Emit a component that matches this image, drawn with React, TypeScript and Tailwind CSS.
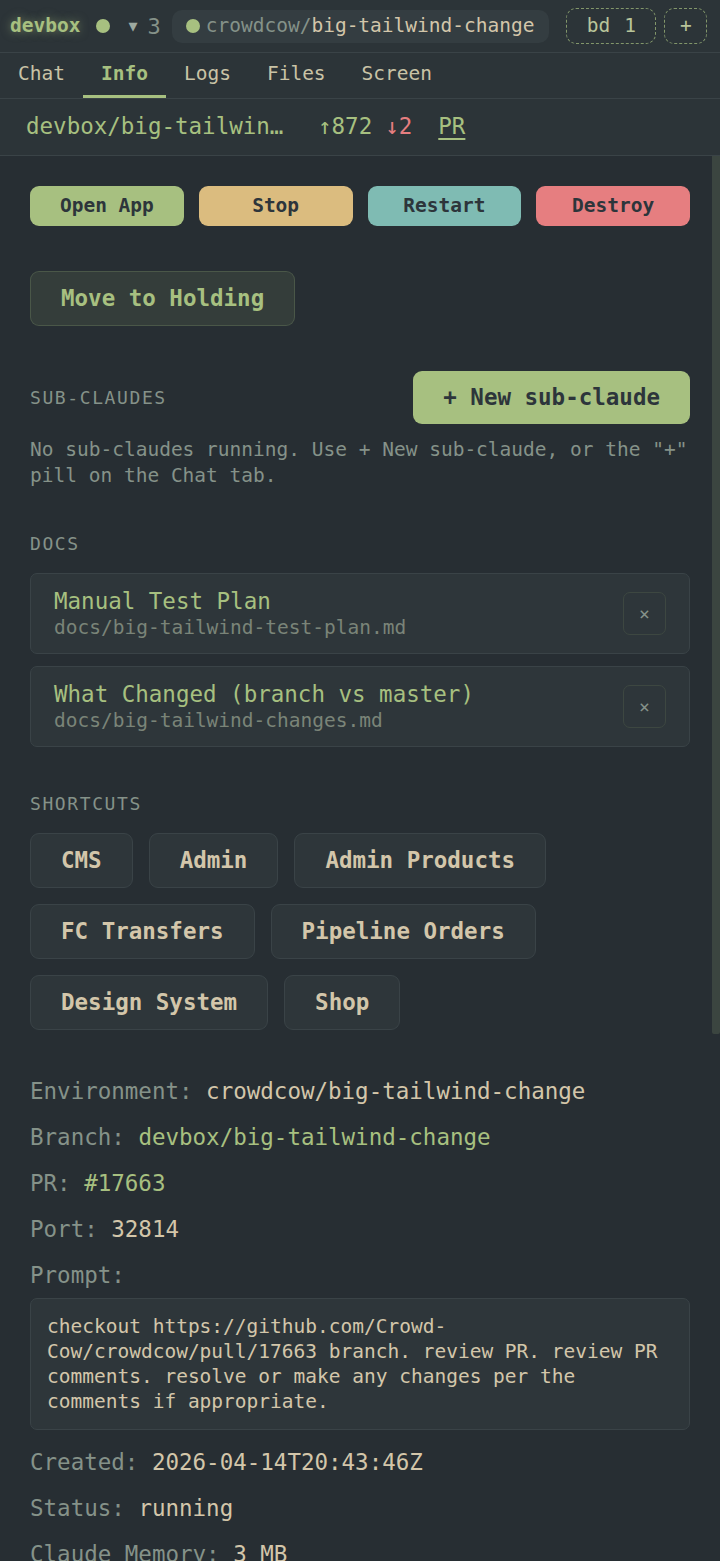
import type { ReactNode } from "react";

const topActions = [
  { label: "Open App", bg: "bg-[#a7c080]" },
  { label: "Stop", bg: "bg-[#dbbc7f]" },
  { label: "Restart", bg: "bg-[#7fbbb3]" },
  { label: "Destroy", bg: "bg-[#e67e80]" },
];

const docs = [
  { title: "Manual Test Plan", path: "docs/big-tailwind-test-plan.md" },
  { title: "What Changed (branch vs master)", path: "docs/big-tailwind-changes.md" },
];

const shortcuts = ["CMS", "Admin", "Admin Products", "FC Transfers", "Pipeline Orders", "Design System", "Shop"];

const tabs = ["Chat", "Info", "Logs", "Files", "Screen"];

function SectionLabel({ children }: { children: ReactNode }) {
  return <div className="text-[18px] leading-[24px] tracking-[1.6px] text-[#859289] uppercase">{children}</div>;
}

function InfoRow({ label, children }: { label: string; children?: ReactNode }) {
  return (
    <div className="mb-[12px] text-[22.5px] leading-[34px]">
      <span className="text-[#859289]">{label}</span> {children}
    </div>
  );
}

function TopBar() {
  return (
    <div className="flex h-[53px] items-center border-b border-[#3a4347] bg-[#2c3438] pl-[10px] pr-[12px]">
      <span className="text-[19.5px] font-bold text-[#a7c080] [text-shadow:0_0_10px_rgba(167,192,128,0.55)]">devbox</span>
      <span className="ml-[16px] h-[14px] w-[14px] rounded-full bg-[#a7c080]" />
      <span className="ml-[18px] text-[15px] text-[#9da9a0]">▼</span>
      <span className="ml-[10px] text-[22px] text-[#859289]">3</span>
      <div className="ml-[11px] flex h-[33px] items-center gap-[6px] rounded-[10px] bg-[#343d41] pl-[14px] pr-[15px]">
        <span className="h-[14px] w-[14px] rounded-full bg-[#a7c080]" />
        <span className="text-[19.5px]">
          <span className="text-[#859289]">crowdcow/</span>
          <span className="text-[#d3c6aa]">big-tailwind-change</span>
        </span>
      </div>
      <div className="ml-[17px] flex h-[36px] w-[90px] items-center justify-center gap-[14px] rounded-[10px] border-[1.5px] border-dashed border-[#a7c080]/70 text-[19.5px] text-[#b8c49a]">
        <span>bd</span>
        <span>1</span>
      </div>
      <div className="ml-[8px] flex h-[36px] w-[43px] items-center justify-center rounded-[10px] border-[1.5px] border-dashed border-[#a7c080]/70 text-[19.5px] text-[#b8c49a]">
        +
      </div>
    </div>
  );
}

function Tabs() {
  return (
    <div className="flex h-[46px] border-b border-[#3a4347] bg-[#2c3438]">
      {tabs.map((t) => {
        const active = t === "Info";
        return (
          <div
            key={t}
            className={`flex items-center border-b-[3px] px-[18px] text-[19.5px] ${
              active ? "border-[#a7c080] font-bold text-[#a7c080]" : "border-transparent text-[#c9c3a6]"
            }`}
          >
            {t}
          </div>
        );
      })}
    </div>
  );
}

function BranchHeader() {
  return (
    <div className="flex h-[57px] items-center border-b border-[#3a4347] bg-[#2c3438] px-[26px] text-[22.5px]">
      <span className="w-[262px] truncate text-[#a7c080]">devbox/big-tailwind-change</span>
      <span className="ml-[30px] text-[#a7c080]">↑872</span>
      <span className="ml-[13px] text-[#e67e80]">↓2</span>
      <span className="ml-[26px] text-[#a7c080] underline underline-offset-4">PR</span>
    </div>
  );
}

export default function App() {
  return (
    <div className="flex h-[1561px] flex-col overflow-hidden bg-[#272e33] font-['DejaVu_Sans_Mono',monospace] text-[#d3c6aa]">
      <TopBar />
      <Tabs />
      <BranchHeader />
      <div className="flex min-h-0 flex-1">
        <div className="min-w-0 flex-1 overflow-hidden">
          <div className="pl-[30px] pr-[22px] pt-[30px]">
            <div className="grid grid-cols-4 gap-[15px]">
              {topActions.map((a) => (
                <button
                  key={a.label}
                  type="button"
                  className={`h-[40px] rounded-[9px] text-[19.5px] font-semibold text-[#2d353b] ${a.bg}`}
                >
                  {a.label}
                </button>
              ))}
            </div>

            <button
              type="button"
              className="mt-[45px] h-[55px] rounded-[9px] border border-[#a7c080]/20 bg-[#a7c080]/10 px-[30px] text-[22.5px] font-semibold text-[#a7c080]"
            >
              Move to Holding
            </button>

            <div className="mt-[45px] flex items-center justify-between">
              <SectionLabel>Sub-claudes</SectionLabel>
              <button
                type="button"
                className="h-[53px] rounded-[9px] bg-[#a7c080] px-[30px] text-[22.5px] font-semibold text-[#2d353b]"
              >
                + New sub-claude
              </button>
            </div>
            <p className="mt-[13px] text-[19.5px] leading-[26px] text-[#859289]">
              No sub-claudes running. Use + New sub-claude, or the "+" pill on the Chat tab.
            </p>

            <div className="mt-[43px]">
              <SectionLabel>Docs</SectionLabel>
              <div className="mt-[17px] flex flex-col gap-[12px]">
                {docs.map((d) => (
                  <div
                    key={d.path}
                    className="flex h-[81px] items-center justify-between rounded-[7px] border border-[#3a4347] bg-[#2e363a] pl-[23px] pr-[23px]"
                  >
                    <div>
                      <div className="text-[22.5px] leading-[27px] text-[#a7c080]">{d.title}</div>
                      <div className="text-[19.5px] leading-[25px] text-[#7a8478]">{d.path}</div>
                    </div>
                    <button
                      type="button"
                      className="flex h-[43px] w-[43px] items-center justify-center rounded-[7px] border border-[#3d4741] text-[18px] text-[#859289]"
                    >
                      ×
                    </button>
                  </div>
                ))}
              </div>
            </div>

            <div className="mt-[45px]">
              <SectionLabel>Shortcuts</SectionLabel>
              <div className="mt-[17px] flex flex-wrap gap-x-[16px] gap-y-[16px] pr-[140px]">
                {shortcuts.map((s) => (
                  <button
                    key={s}
                    type="button"
                    className="h-[55px] rounded-[9px] border border-[#3a4347] bg-[#2e363a] px-[30px] text-[22.5px] font-semibold text-[#d3c6aa]"
                  >
                    {s}
                  </button>
                ))}
              </div>
            </div>

            <div className="mt-[44px]">
              <InfoRow label="Environment:">crowdcow/big-tailwind-change</InfoRow>
              <InfoRow label="Branch:">
                <span className="text-[#a7c080]">devbox/big-tailwind-change</span>
              </InfoRow>
              <InfoRow label="PR:">
                <span className="text-[#a7c080]">#17663</span>
              </InfoRow>
              <InfoRow label="Port:">32814</InfoRow>
              <div className="mb-[6px] text-[22.5px] leading-[34px] text-[#859289]">Prompt:</div>
              <div className="rounded-[7px] border border-[#3a4347] bg-[#2e363a] px-[16px] py-[15px] text-[19.5px] leading-[25px] text-[#d3c6aa]">
                checkout https://github.com/Crowd-Cow/crowdcow/pull/17663 branch. review PR. review PR comments. resolve
                or make any changes per the comments if appropriate.
              </div>
              <div className="mt-[15px]">
                <InfoRow label="Created:">2026-04-14T20:43:46Z</InfoRow>
                <InfoRow label="Status:">running</InfoRow>
                <InfoRow label="Claude Memory:">3 MB</InfoRow>
              </div>
            </div>
          </div>
        </div>
        {/* scrollbar track */}
        <div className="w-[8px] shrink-0">
          <div className="h-[878px] rounded-b-[2px] bg-[#3b4540]" />
        </div>
      </div>
    </div>
  );
}
